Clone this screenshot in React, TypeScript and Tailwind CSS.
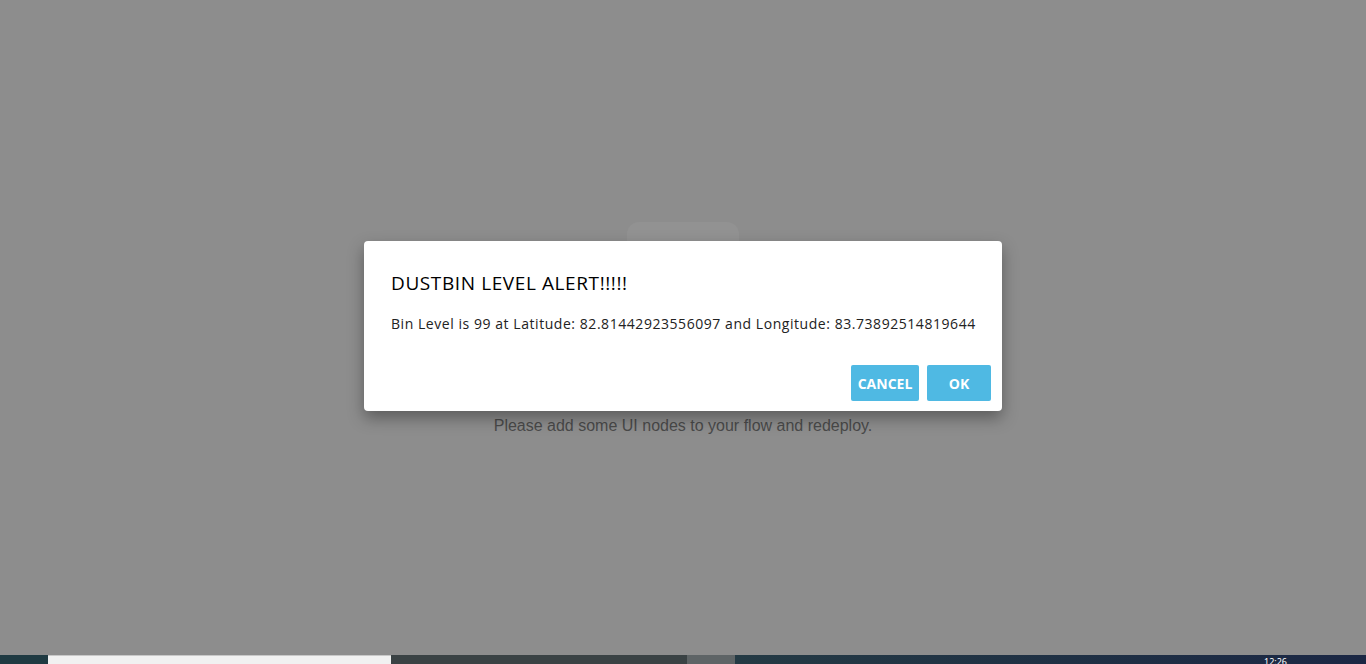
import React from 'react';

const AlertDialog: React.FC = () => {
  return (
    <div className="absolute inset-0 flex items-center justify-center pb-[3px]">
      <div className="w-[638px] h-[170px] bg-white rounded-[4px] shadow-[0_7px_16px_rgba(0,0,0,0.35)] flex flex-col">
        <h2 className="pl-[27px] pt-[30px] text-[19px] leading-[24px] tracking-[0.6px] text-black font-normal" style={{ fontFamily: '"Open Sans", sans-serif' }}>
          DUSTBIN LEVEL ALERT!!!!!
        </h2>
        <p className="pl-[27px] pt-[19px] text-[14px] leading-[20px] tracking-[0.55px] text-[#222]" style={{ fontFamily: '"Open Sans", sans-serif' }}>
          Bin Level is 99 at Latitude: 82.81442923556097 and Longitude: 83.73892514819644
        </p>
        <div className="mt-auto flex justify-end gap-[8px] pr-[11px] pb-[10px]">
          <button className="w-[68px] h-[36px] rounded-[2px] bg-[#4fb9e3] text-white text-[14px] font-bold" style={{ fontFamily: '"Open Sans", sans-serif' }}>
            CANCEL
          </button>
          <button className="w-[64px] h-[36px] rounded-[2px] bg-[#4fb9e3] text-white text-[14px] font-bold" style={{ fontFamily: '"Open Sans", sans-serif' }}>
            OK
          </button>
        </div>
      </div>
    </div>
  );
};

const Taskbar: React.FC = () => (
  <div className="h-[9px] flex">
    <div className="w-[48px] bg-[#1f3a42]" />
    <div className="w-[343px] bg-[#f1f1f1] border-t border-[#c8c8c8]" />
    <div className="w-[296px] bg-[#3a4244]" />
    <div className="w-[48px] bg-[#5e6466]" />
    <div className="flex-1 bg-gradient-to-r from-[#243a44] to-[#1b2744] flex justify-end">
      <div className="w-[102px] text-[9px] leading-[9px] text-white pt-[2px] overflow-hidden" style={{ fontFamily: '"Noto Sans", sans-serif' }}>
        12:26
      </div>
    </div>
  </div>
);

export default function App() {
  return (
    <div className="w-[1366px] h-[664px] flex flex-col overflow-hidden">
      <div className="relative flex-1 bg-[#8d8d8d]">
        <div className="flex flex-col items-center pt-[222px]">
          <div className="w-[112px] h-[100px] rounded-[12px] bg-[#929292]" />
          <p className="mt-[92px] text-[16px] text-[#4a4a4a]" style={{ fontFamily: '"Liberation Sans", Arial, sans-serif' }}>
            Please add some UI nodes to your flow and redeploy.
          </p>
        </div>
        <AlertDialog />
      </div>
      <Taskbar />
    </div>
  );
}
